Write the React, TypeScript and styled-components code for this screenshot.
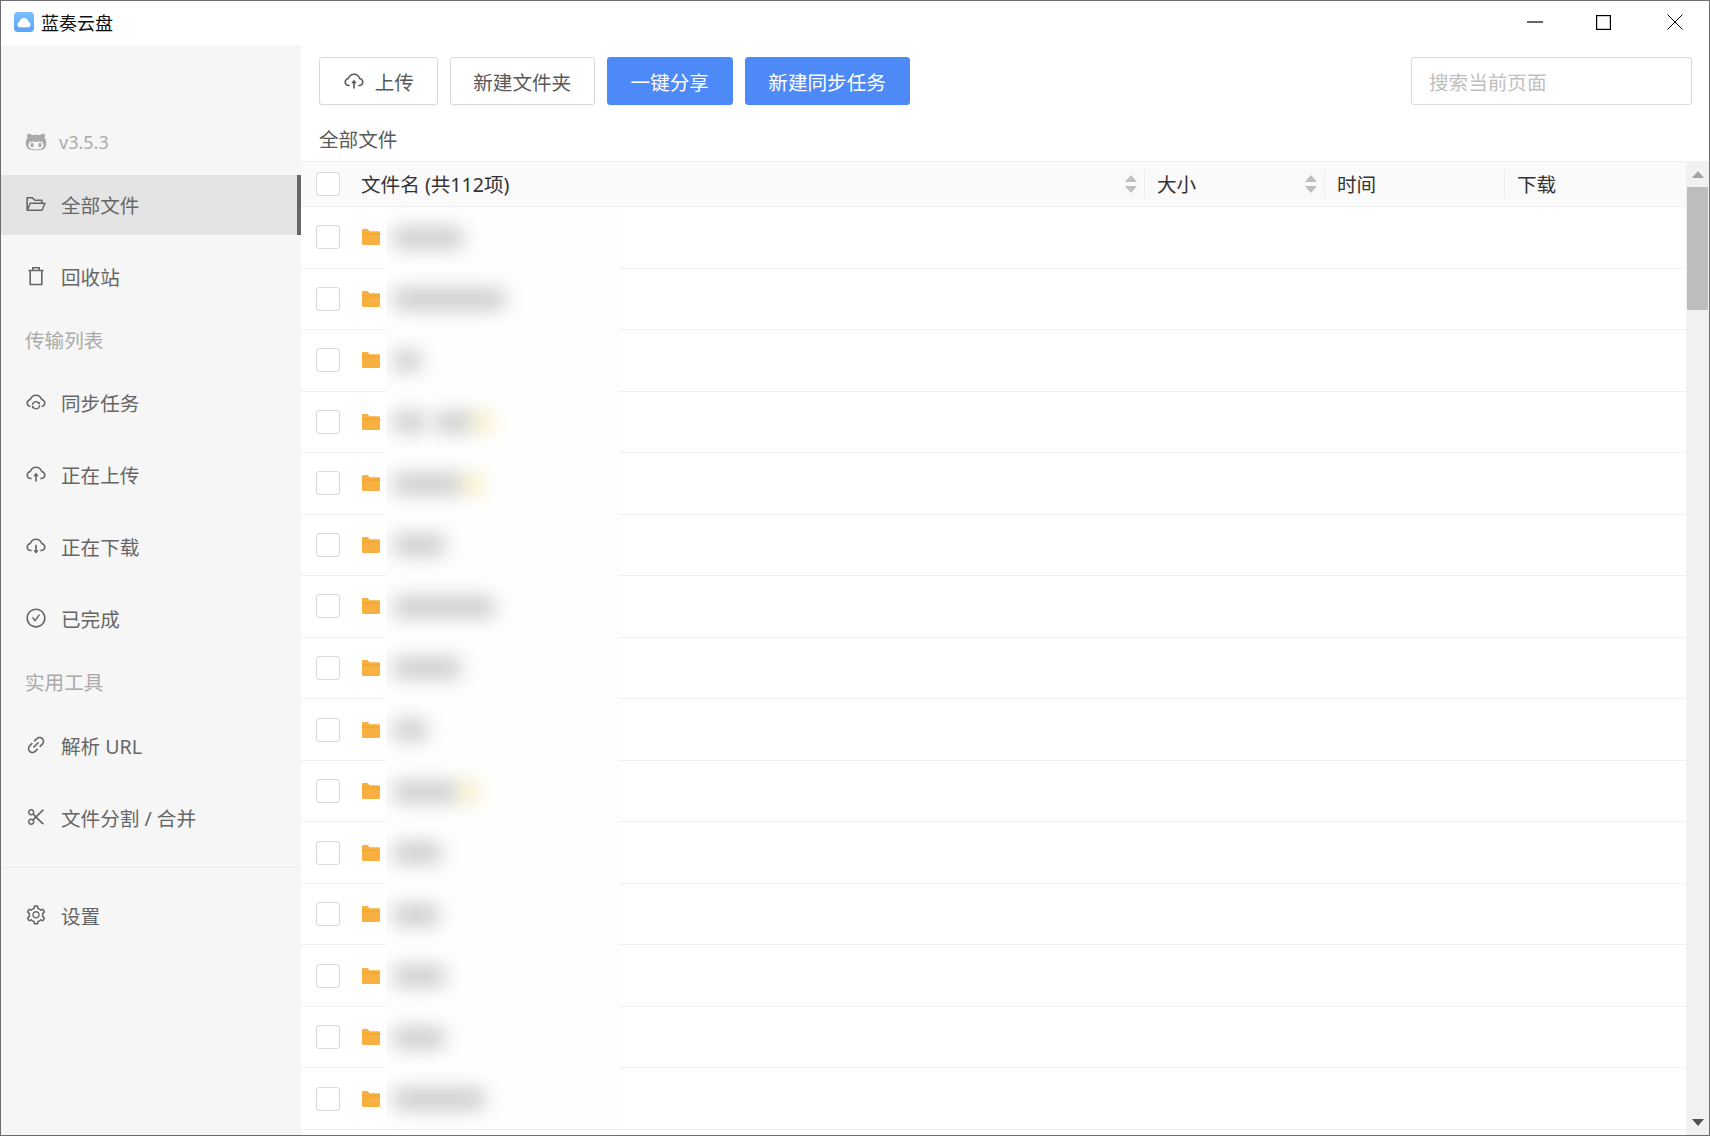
import styled, { createGlobalStyle } from "styled-components";
import {
  AiOutlineCheckCircle,
  AiOutlineCloudDownload,
  AiOutlineCloudSync,
  AiOutlineCloudUpload,
  AiOutlineFolderOpen,
  AiOutlineLink,
  AiOutlineScissor,
  AiOutlineSetting,
} from "react-icons/ai";
import { FaGithubAlt } from "react-icons/fa";

const GlobalStyle = createGlobalStyle`
  html, body {
    margin: 0;
    padding: 0;
    background: #fff;
  }
  * {
    box-sizing: border-box;
  }
`;

const Window = styled.div`
  width: 1710px;
  height: 1136px;
  display: flex;
  flex-direction: column;
  border: 1px solid #6e6e6e;
  overflow: hidden;
  background: #fff;
  font-family: "Noto Sans", "Noto Sans CJK SC", sans-serif;
  font-size: 19.6px;
  color: #666;
`;

const TitleBar = styled.div`
  height: 44px;
  flex: none;
  display: flex;
  align-items: center;
  padding: 0 0 2px 13px;
`;

const AppTitle = styled.span`
  margin-left: 7px;
  font-size: 18px;
  color: #111;
`;

const WindowControls = styled.div`
  margin-left: auto;
  display: flex;
  align-items: center;
  padding-right: 26px;
  gap: 53px;

  & > :last-child {
    margin-left: 3px;
  }
`;

const Body = styled.div`
  flex: 1;
  min-height: 0;
  display: flex;
`;

const Sidebar = styled.nav`
  width: 300px;
  flex: none;
  background: #f6f6f6;
  padding-top: 67px;
`;

const VersionRow = styled.div`
  height: 60px;
  margin-bottom: 3px;
  display: flex;
  align-items: center;
  padding: 0 0 1px 24px;
  gap: 12px;
  color: #aaa;
  font-size: 18px;
`;

const MenuItem = styled.div<{ $active?: boolean }>`
  height: 60px;
  margin-bottom: 12px;
  display: flex;
  align-items: center;
  padding: 0 0 2px 24px;
  gap: 14px;
  color: #666;
  background: ${(p) => (p.$active ? "#e4e4e4" : "transparent")};
  border-right: ${(p) => (p.$active ? "4px solid #666" : "none")};

  svg {
    width: 22px;
    height: 22px;
    flex: none;
  }
`;

const GroupLabel = styled.div<{ $spacing: number }>`
  height: 44px;
  margin-bottom: ${(p) => p.$spacing}px;
  display: flex;
  align-items: center;
  padding: 0 0 4px 24px;
  color: #aaa;
`;

const SidebarDivider = styled.div`
  height: 1px;
  margin: 19px 0 18px;
  background: #eee;
`;

const Main = styled.main`
  flex: 1;
  min-width: 0;
  display: flex;
  flex-direction: column;
`;

const Toolbar = styled.div`
  height: 72px;
  flex: none;
  display: flex;
  align-items: flex-start;
  padding: 12px 17px 0 18px;
  gap: 12px;
`;

const Button = styled.button<{ $primary?: boolean }>`
  height: 48px;
  display: flex;
  align-items: center;
  gap: 10px;
  padding: 0 22.7px;
  font: inherit;
  border-radius: 3px;
  border: 1px solid ${(p) => (p.$primary ? "#4e89f8" : "#d9d9d9")};
  background: ${(p) => (p.$primary ? "#4e89f8" : "#fff")};
  color: ${(p) => (p.$primary ? "#fff" : "#595959")};
  box-shadow: 0 2px 0 rgba(0, 0, 0, 0.02);

  svg {
    width: 22px;
    height: 22px;
  }
`;

const SearchBox = styled.div`
  margin-left: auto;
  width: 281px;
  height: 48px;
  display: flex;
  align-items: center;
  padding-left: 17px;
  border: 1px solid #d9d9d9;
  border-radius: 3px;
  color: #bfbfbf;
`;

const Breadcrumb = styled.div`
  height: 44px;
  flex: none;
  display: flex;
  align-items: center;
  padding: 0 0 2px 18px;
  color: #595959;
`;

const TableArea = styled.div`
  flex: 1;
  min-height: 0;
  display: flex;
`;

const Table = styled.div`
  flex: 1;
  min-width: 0;
`;

const HeaderRow = styled.div`
  height: 46px;
  display: flex;
  align-items: center;
  background: #fafafa;
  border-top: 1px solid #f0f0f0;
  border-bottom: 1px solid #f0f0f0;
  color: #333;
`;

const NameHeader = styled.div`
  flex: 1;
  display: flex;
  align-items: center;
  padding: 0 7px 0 15px;
`;

const HeaderText = styled.span`
  margin-left: 21px;
  padding-bottom: 1px;
`;

const HeaderCell = styled.div<{ $width: number }>`
  width: ${(p) => p.$width}px;
  height: 30px;
  flex: none;
  display: flex;
  align-items: center;
  padding: 0 7px 1px 12px;
  border-left: 1px solid #eee;
`;

const SortCarets = styled.svg`
  margin-left: auto;
  width: 12px;
  height: 18px;
  flex: none;
`;

const Checkbox = styled.span`
  width: 24px;
  height: 24px;
  flex: none;
  background: #fff;
  border: 1.5px solid #d9d9d9;
  border-radius: 3px;
`;

const Row = styled.div`
  height: 61.54px;
  display: flex;
  align-items: center;
  padding-left: 15px;
  border-bottom: 1px solid #f0f0f0;
`;

const FolderIcon = styled.svg`
  width: 18px;
  height: 16px;
  flex: none;
  margin-left: 22px;
`;

const NameCell = styled.div<{ $last?: boolean }>`
  align-self: stretch;
  width: 233px;
  margin-left: 6px;
  margin-bottom: ${(p) => (p.$last ? "0" : "-1px")};
  display: flex;
  align-items: center;
  overflow: hidden;
  background: #fefefe;
`;

const BlurBlob = styled.span<{ $width: number; $gap: number; $tint?: boolean }>`
  width: ${(p) => p.$width}px;
  height: 18px;
  flex: none;
  margin-left: ${(p) => p.$gap}px;
  background: ${(p) => (p.$tint ? "#f3e6a0" : "#c2c2c2")};
  filter: blur(10px);
`;

const ScrollRail = styled.div`
  width: 23px;
  flex: none;
  display: flex;
  flex-direction: column;
  background: #f1f1f1;
`;

const ScrollButton = styled.div<{ $end?: boolean }>`
  height: 26px;
  flex: none;
  display: flex;
  align-items: center;
  justify-content: center;
  margin-top: ${(p) => (p.$end ? "auto" : "0")};
`;

const ScrollThumb = styled.div`
  height: 123px;
  margin: 0 1px;
  background: #bdbdbd;
`;

const AppLogo = () => (
  <svg width="20" height="20" viewBox="0 0 20 20">
    <defs>
      <linearGradient id="logoFill" x1="0" y1="0" x2="0" y2="1">
        <stop offset="0" stopColor="#7bbffc" />
        <stop offset="1" stopColor="#5aa4f8" />
      </linearGradient>
    </defs>
    <rect width="20" height="20" rx="4" fill="url(#logoFill)" />
    <path
      d="M5.2 15.2c-1.3-.6-1.9-1.8-1.6-3.2.2-1.1 1-1.9 2-2.2.3-2.2 2.1-3.9 4.4-3.9s4.1 1.7 4.4 3.9c1 .3 1.8 1.1 2 2.2.3 1.4-.3 2.6-1.6 3.2z"
      fill="#fff"
    />
  </svg>
);

const MinimizeIcon = () => (
  <svg width="16" height="2" viewBox="0 0 16 2">
    <path d="M0 1h16" stroke="#000" strokeWidth="1.2" />
  </svg>
);

const MaximizeIcon = () => (
  <svg width="15" height="15" viewBox="0 0 15 15">
    <rect x=".6" y=".6" width="13.8" height="13.8" fill="none" stroke="#000" strokeWidth="1.2" />
  </svg>
);

const CloseIcon = () => (
  <svg width="16" height="16" viewBox="0 0 16 16">
    <path d="M.5.5l15 15M15.500.5l-15 15" stroke="#000" strokeWidth="1" fill="none" />
  </svg>
);

const TrashIcon = () => (
  <svg viewBox="0 0 22 22" fill="none" stroke="#666" strokeWidth="1.6">
    <path d="M3.500 5.500h15M7.800 5.300V2.800h6.400v2.500M5.200 5.500v14h11.600v-14" />
  </svg>
);

const Sorter = () => (
  <SortCarets viewBox="0 0 12 18">
    <path d="M6 0l6 7H0z" fill="#bfbfbf" />
    <path d="M6 18l6-7H0z" fill="#bfbfbf" />
  </SortCarets>
);

const Folder = () => (
  <FolderIcon viewBox="0 0 18 16">
    <path d="M0 1.200C0 .5.5 0 1.200 0h4.600l1.600 2.200h9.400c.7 0 1.200.5 1.200 1.200v11.400c0 .7-.5 1.200-1.200 1.200H1.200C.5 16 0 15.500 0 14.800z" fill="#f8b040" />
    <path d="M0 5h18" stroke="#f0a02c" strokeWidth="1" />
  </FolderIcon>
);

type Blob = { width: number; gap: number; tint?: boolean };

const rows: Blob[][] = [
  [{ width: 68, gap: 8 }],
  [{ width: 110, gap: 8 }],
  [{ width: 26, gap: 8 }],
  [{ width: 30, gap: 8 }, { width: 36, gap: 12 }, { width: 14, gap: 4, tint: true }],
  [{ width: 68, gap: 8 }, { width: 14, gap: 4, tint: true }],
  [{ width: 50, gap: 8 }],
  [{ width: 100, gap: 8 }],
  [{ width: 66, gap: 8 }],
  [{ width: 32, gap: 8 }],
  [{ width: 64, gap: 8 }, { width: 14, gap: 4, tint: true }],
  [{ width: 46, gap: 8 }],
  [{ width: 44, gap: 8 }],
  [{ width: 50, gap: 8 }],
  [{ width: 50, gap: 8 }],
  [{ width: 90, gap: 8 }],
];

export default function App() {
  return (
    <Window>
      <GlobalStyle />
      <TitleBar>
        <AppLogo />
        <AppTitle>蓝奏云盘</AppTitle>
        <WindowControls>
          <MinimizeIcon />
          <MaximizeIcon />
          <CloseIcon />
        </WindowControls>
      </TitleBar>
      <Body>
        <Sidebar>
          <VersionRow>
            <FaGithubAlt size={22} color="#aaa" />
            v3.5.3
          </VersionRow>
          <MenuItem $active>
            <AiOutlineFolderOpen />
            全部文件
          </MenuItem>
          <MenuItem>
            <TrashIcon />
            回收站
          </MenuItem>
          <GroupLabel $spacing={10}>传输列表</GroupLabel>
          <MenuItem>
            <AiOutlineCloudSync />
            同步任务
          </MenuItem>
          <MenuItem>
            <AiOutlineCloudUpload />
            正在上传
          </MenuItem>
          <MenuItem>
            <AiOutlineCloudDownload />
            正在下载
          </MenuItem>
          <MenuItem>
            <AiOutlineCheckCircle />
            已完成
          </MenuItem>
          <GroupLabel $spacing={11}>实用工具</GroupLabel>
          <MenuItem>
            <AiOutlineLink />
            解析 URL
          </MenuItem>
          <MenuItem>
            <AiOutlineScissor />
            文件分割 / 合并
          </MenuItem>
          <SidebarDivider />
          <MenuItem>
            <AiOutlineSetting />
            设置
          </MenuItem>
        </Sidebar>
        <Main>
          <Toolbar>
            <Button>
              <AiOutlineCloudUpload />
              上传
            </Button>
            <Button>新建文件夹</Button>
            <Button $primary>一键分享</Button>
            <Button $primary>新建同步任务</Button>
            <SearchBox>搜索当前页面</SearchBox>
          </Toolbar>
          <Breadcrumb>全部文件</Breadcrumb>
          <TableArea>
            <Table>
              <HeaderRow>
                <NameHeader>
                  <Checkbox />
                  <HeaderText>文件名 (共112项)</HeaderText>
                  <Sorter />
                </NameHeader>
                <HeaderCell $width={180}>
                  大小
                  <Sorter />
                </HeaderCell>
                <HeaderCell $width={180}>时间</HeaderCell>
                <HeaderCell $width={182}>下载</HeaderCell>
              </HeaderRow>
              {rows.map((blobs, i) => (
                <Row key={i}>
                  <Checkbox />
                  <Folder />
                  <NameCell $last={i === rows.length - 1}>
                    {blobs.map((b, j) => (
                      <BlurBlob key={j} $width={b.width} $gap={b.gap} $tint={b.tint} />
                    ))}
                  </NameCell>
                </Row>
              ))}
            </Table>
            <ScrollRail>
              <ScrollButton>
                <svg width="12" height="7" viewBox="0 0 12 7">
                  <path d="M6 0l6 7H0z" fill="#a3a3a3" />
                </svg>
              </ScrollButton>
              <ScrollThumb />
              <ScrollButton $end>
                <svg width="12" height="7" viewBox="0 0 12 7">
                  <path d="M6 7l6-7H0z" fill="#505050" />
                </svg>
              </ScrollButton>
            </ScrollRail>
          </TableArea>
        </Main>
      </Body>
    </Window>
  );
}
